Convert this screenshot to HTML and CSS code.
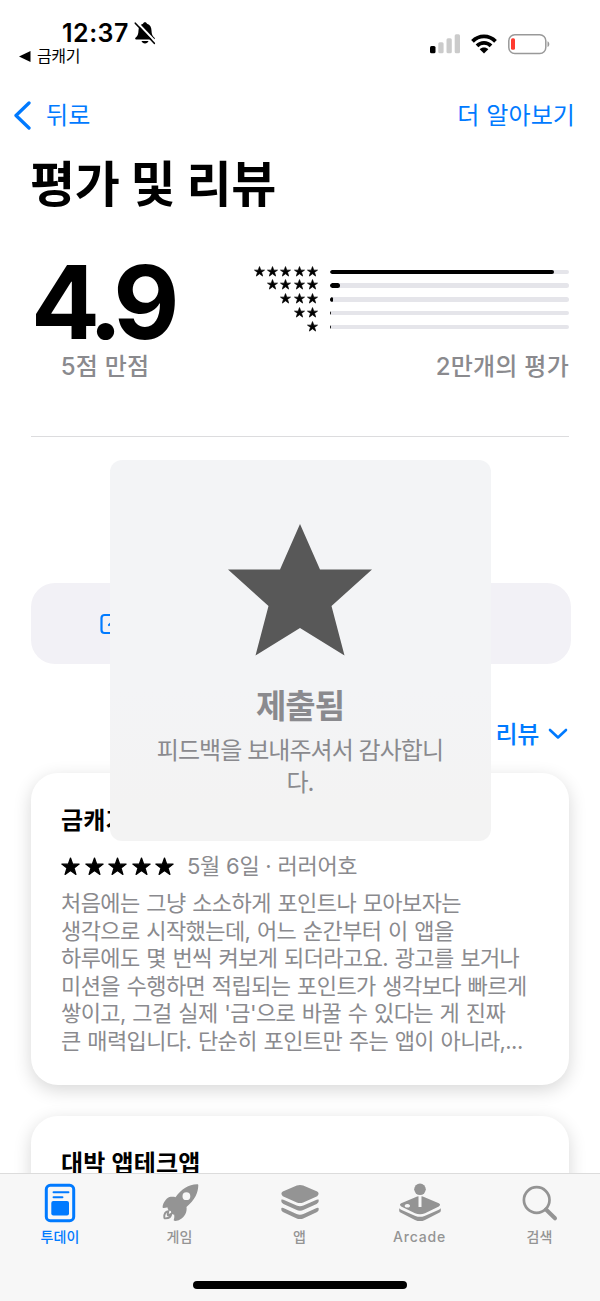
FILE: index.html
```html
<!DOCTYPE html>
<html lang="ko">
<head>
<meta charset="utf-8">
<title>평가 및 리뷰</title>
<link rel="stylesheet" href="styles.css">
</head>
<body>
<svg class="defs" width="0" height="0" aria-hidden="true">
  <symbol id="star" viewBox="0 0 20 19"><path d="M10 0.6 12.3 7H19.1L13.7 11 15.7 17.8 10 13.8 4.3 17.8 6.3 11 0.9 7H7.7Z" fill="currentColor" stroke="currentColor" stroke-width="1.300" stroke-linejoin="round"/></symbol>
</svg>
<div class="screen">
  <header class="status">
    <div class="status-left">
      <div class="clock"><span>12:37</span>
        <svg width="22" height="24" viewBox="0 0 22 24"><path d="M11 1.2c-1 0-1.8.6-2 1.6C5.800 3.800 4.600 6.400 4.500 9.500c-.1 4-1 5.500-3 7.300-.6.7-.4 1.600.6 1.600h17.800c1 0 1.200-.9.6-1.600-2-1.800-2.900-3.300-3-7.300-.1-3.100-1.300-5.700-4.500-6.700-.2-1-1-1.600-2-1.600ZM7.500 20h7c-.5 1.500-1.800 2.400-3.500 2.400S8 21.500 7.500 20Z"/><path d="M2.700 1 21.500 20.800" stroke="#fff" stroke-width="2"/><path d="M1.300 2.200 20.300 22.300" stroke="#000" stroke-width="1.600" stroke-linecap="round"/></svg>
      </div>
      <div class="return"><svg width="12" height="11" viewBox="0 0 12 11"><path d="M0 5.500 11.500 0v11Z"/></svg><span>금캐기</span></div>
    </div>
    <div class="status-right">
      <svg width="30" height="20" viewBox="0 0 30 20"><rect y="12" width="5.500" height="7.300" rx="1.500"/><g fill="#cbcbcb"><rect x="8.300" y="8.300" width="5.300" height="11" rx="1.500"/><rect x="16.500" y="4.300" width="5.300" height="15" rx="1.500"/><rect x="24.700" y=".3" width="5.300" height="19" rx="1.500"/></g></svg>
      <svg class="wifi" width="26" height="20" viewBox="0 0 26 20"><g fill="none" stroke="#000" stroke-width="3.800"><path d="M1.500 7.300C8 .7 18 .7 24.500 7.300"/><path d="M6 11.900c4-4 10-4 14 0"/></g><path d="M13 19.500 8.700 15.300c2.300-2.300 6.300-2.300 8.600 0Z"/></svg>
      <svg width="42" height="21" viewBox="0 0 42 21"><rect x=".8" y=".8" width="37" height="18.800" rx="6" fill="#fff" stroke="#999" stroke-width="1.500"/><rect x="3" y="4.300" width="4" height="11.500" rx="1.500" fill="#ff3b30"/><path d="M39.500 7.300c2.400.8 2.400 5 0 5.800Z" fill="#999"/></svg>
    </div>
  </header>
  <nav class="nav">
    <span class="back"><svg width="19" height="30" viewBox="0 0 19 30"><path d="M17 3 4 15.500 17 28" fill="none" stroke="#007aff" stroke-width="3.300" stroke-linecap="round" stroke-linejoin="round"/></svg><span>뒤로</span></span>
    <span class="more">더 알아보기</span>
  </nav>
  <h1 class="title">평가 및 리뷰</h1>
  <section class="rating">
    <div class="score"><div class="value">4.9</div><div class="caption">5점 만점</div></div>
    <div class="breakdown">
      <div class="rows">
        <div class="row"><span class="stars"><svg><use href="#star"/></svg><svg><use href="#star"/></svg><svg><use href="#star"/></svg><svg><use href="#star"/></svg><svg><use href="#star"/></svg></span><span class="bar"><span class="fill" style="width:93.700%"></span></span></div>
        <div class="row"><span class="stars"><svg><use href="#star"/></svg><svg><use href="#star"/></svg><svg><use href="#star"/></svg><svg><use href="#star"/></svg></span><span class="bar"><span class="fill" style="width:4.200%"></span></span></div>
        <div class="row"><span class="stars"><svg><use href="#star"/></svg><svg><use href="#star"/></svg><svg><use href="#star"/></svg></span><span class="bar"><span class="fill" style="width:1.100%"></span></span></div>
        <div class="row"><span class="stars"><svg><use href="#star"/></svg><svg><use href="#star"/></svg></span><span class="bar"><span class="fill" style="width:.2%"></span></span></div>
        <div class="row"><span class="stars"><svg><use href="#star"/></svg></span><span class="bar"><span class="fill" style="width:.6%"></span></span></div>
      </div>
      <div class="count">2만개의 평가</div>
    </div>
  </section>
  <div class="write"><svg width="22" height="22" viewBox="0 0 22 22" fill="none" stroke="#007aff" stroke-width="2.200" stroke-linecap="round"><path d="M13 2H4.500A3 3 0 0 0 1.500 5v12a3 3 0 0 0 3 3H16a3 3 0 0 0 3-3V9"/><path d="M9 12 20 2"/></svg></div>
  <div class="sort"><span>리뷰</span><svg width="20" height="12" viewBox="0 0 20 12"><path d="M2 2 10 9.500 18 2" fill="none" stroke="#007aff" stroke-width="2.600" stroke-linecap="round" stroke-linejoin="round"/></svg></div>
  <article class="card">
    <h2>금캐기</h2>
    <div class="meta"><span class="stars"><svg><use href="#star"/></svg><svg><use href="#star"/></svg><svg><use href="#star"/></svg><svg><use href="#star"/></svg><svg><use href="#star"/></svg></span><span class="byline">5월 6일 · 러러어호</span></div>
    <p>처음에는 그냥 소소하게 포인트나 모아보자는<br>생각으로 시작했는데, 어느 순간부터 이 앱을<br>하루에도 몇 번씩 켜보게 되더라고요. 광고를 보거나<br>미션을 수행하면 적립되는 포인트가 생각보다 빠르게<br>쌓이고, 그걸 실제 '금'으로 바꿀 수 있다는 게 진짜<br>큰 매력입니다. 단순히 포인트만 주는 앱이 아니라,...</p>
  </article>
  <article class="card"><h2>대박 앱테크앱</h2></article>

  <div class="toast">
    <svg width="144" height="132" viewBox="0 0 144 132"><path d="M72 0 92 45.500h52L103.500 82 116.500 131.500 72 104 27.500 131.500 40.500 82 0 45.500h52Z" fill="#585858"/></svg>
    <div class="toast-title">제출됨</div>
    <div class="toast-text">피드백을 보내주셔서 감사합니<br>다.</div>
  </div>

  <footer class="tabs">
    <div class="tab active"><svg width="44" height="40" viewBox="0 0 44 40"><rect x="8.300" y="2.300" width="27.400" height="35.400" rx="4" fill="none" stroke="currentColor" stroke-width="3"/><path d="M15.500 9.300h15M15.500 14.300h9" stroke="currentColor" stroke-width="1.900" stroke-linecap="round"/><rect x="13.300" y="18" width="17.700" height="14.500" rx="2" fill="currentColor"/></svg><span>투데이</span></div>
    <div class="tab"><svg width="44" height="40" viewBox="0 0 44 40"><path fill="currentColor" fill-rule="evenodd" d="M39 1.300c.9-.1 1.400.4 1.300 1.300-.2 7.700-3.500 14.500-11.800 21.300.8 5-1.800 10-6.500 12.600-2 1.300-4.300 1.700-5.700 1.300-.7-.3-.7-1-.4-1.600.6-1.500.5-2.700.2-4.600-1.800.3-3.400-1.500-3.200-3.500-2-.2-3.500-1.700-3.300-3.600-1.300-.2-2.300.2-3.700.5-.9.200-1.400-.3-1.300-1.300.5-4.200 4.500-9.700 8.200-9.900 1.800-.1 3.200-.2 4.700.4C23.500 6.300 30.500 1.400 39 1.300ZM28.400 9.300a3.900 3.900 0 1 0 0 7.800 3.900 3.900 0 0 0 0-7.800Z"/><path d="M10.300 28.300c-3.200.7-4.200 3.200-4 6 0 .8.4 1.200 1.200 1.100 3.200-.1 5.600-1.300 5.700-4.500l-2.500 1.200c-.8.300-1.200-.2-.9-1Z" fill="none" stroke="currentColor" stroke-width="1.900"/></svg><span>게임</span></div>
    <div class="tab"><svg width="44" height="40" viewBox="0 0 44 40"><g fill="currentColor"><path d="M18.800 2.600q3.200-1.400 6.400 0l14 6q2.800 2 0 4.600l-14 6.200q-3.200 1.400-6.400 0l-14-6.200q-2.800-2.600 0-4.600Z"/><path d="M3.400 16.600q1-.4 2 .1l13.200 5.800q3.400 1.500 6.800 0l13.200-5.800q1-.5 2-.1c.4 2-.3 3.600-2 4.300l-12.800 5.900q-3.800 1.700-7.600 0L5.400 20.900c-1.700-.7-2.400-2.300-2-4.300Z"/><path d="M3.400 25q1-.4 2 .1l13.200 5.800q3.400 1.500 6.800 0l13.200-5.800q1-.5 2-.1c.4 2-.3 3.600-2 4.300l-12.800 5.900q-3.800 1.700-7.600 0L5.400 29.300c-1.700-.7-2.400-2.300-2-4.300Z"/></g></svg><span>앱</span></div>
    <div class="tab"><svg width="44" height="40" viewBox="0 0 44 40"><g fill="currentColor"><circle cx="22" cy="6.300" r="5.800"/><path fill-rule="evenodd" d="M20.500 13.300q-1.300.2-2.500.8L3.200 20.300q-2.500 1.500 0 3.200L17 30.200q5 2.200 10 0l13.800-6.700q2.500-1.700 0-3.200L26 14.100q-1.200-.6-2.500-.8V24h-3ZM9.300 21a2.700 1.800 0 1 0 .1 0Z"/><path d="M1.200 25.300q1 1 2.500 1.700l13.700 5.900q4.600 1.900 9.200 0L40.300 27q1.500-.7 2.500-1.700v2.500q0 1.300-1.700 2L27 36.900q-5 2.400-10 0L2.900 29.800q-1.700-.7-1.700-2Z"/></g></svg><span class="latin">Arcade</span></div>
    <div class="tab"><svg width="44" height="40" viewBox="0 0 44 40"><circle cx="18.700" cy="17" r="12.800" fill="none" stroke="currentColor" stroke-width="2.700"/><path d="M28 26.500 37 35.300" stroke="currentColor" stroke-width="4" stroke-linecap="round"/></svg><span>검색</span></div>
    <div class="home"></div>
  </footer>
</div>
</body>
</html>
```
FILE: styles.css
```css
* { box-sizing: border-box; }
body {
  margin: 0;
  background: #fff;
  color: #000;
  font-family: Inter, "Noto Sans CJK KR", sans-serif;
}
svg { display: block; flex: none; }
.defs { position: absolute; }
.screen { position: relative; width: 600px; height: 1301px; overflow: hidden; }

.status { display: flex; justify-content: space-between; height: 88px; padding: 19px 50px 0 19px; }
.clock { display: flex; align-items: center; gap: 5px; height: 28px; padding-left: 43px; font-size: 25px; font-weight: 600; letter-spacing: .5px; }
.return { display: flex; align-items: center; gap: 6px; height: 18px; font-size: 16px; line-height: 18px; letter-spacing: -.4px; }
.status-right { display: flex; align-items: center; height: 50px; }
.status-right .wifi { margin: 0 11px 0 11px; }

.nav { display: flex; justify-content: space-between; align-items: center; height: 54px; padding: 0 25px 0 12px; color: #007aff; font-size: 24px; line-height: 30px; letter-spacing: .1px; }
.nav .more, .back span { padding-top: 2px; }
.back { display: flex; align-items: center; gap: 15px; height: 30px; }
.title { margin: 0; padding-left: 30px; height: 86px; line-height: 86px; font-size: 49px; font-weight: 700; letter-spacing: -.4px; }

.rating { display: flex; justify-content: space-between; margin: 0 31px 0 31px; height: 209px; border-bottom: 1px solid #dcdcde; color: #8a8a8e; font-size: 24px; font-weight: 500; letter-spacing: .25px; }
.score { width: 148px; padding-top: 25px; text-align: center; }
.value { height: 98px; margin-right: 14px; line-height: 98px; color: #000; font-size: 102px; font-weight: 700; letter-spacing: -8px; }
.caption, .count { height: 32px; line-height: 32px; }
.breakdown { width: 316px; padding-top: 37px; }
.rows { height: 86px; color: #000; }
.row { display: flex; align-items: center; justify-content: flex-end; height: 13.75px; gap: 12px; }
.row .stars { display: flex; gap: 2.300px; padding-bottom: 1.500px; }
.row .stars svg { width: 11px; height: 11px; }
.bar { width: 239px; height: 4.500px; border-radius: 3px; background: #e5e5ea; overflow: hidden; }
.fill { display: block; height: 100%; border-radius: 3px; background: #000; }
.count { text-align: right; }

.write { display: flex; align-items: center; height: 81px; margin: 146px 29px 0 31px; padding-left: 69px; border-radius: 24px; background: #f2f1f6; }
.sort { display: flex; align-items: center; justify-content: flex-end; gap: 9px; height: 40px; margin: 50px 32px 19px; color: #007aff; font-size: 24px; line-height: 30px; font-weight: 500; letter-spacing: -.3px; }
.sort span { padding-top: 1px; }

.card { height: 312px; margin: 0 31px 31px; padding: 32px 30px 0; border-radius: 27px; background: #fff; box-shadow: 0 5px 18px rgba(0, 0, 0, .16); }
.card h2 { margin: 0; height: 32px; line-height: 32px; font-size: 24px; font-weight: 700; letter-spacing: .2px; }
.meta { display: flex; align-items: center; gap: 13px; height: 30px; margin-top: 14px; color: #8a8a8e; font-size: 22px; line-height: 26px; letter-spacing: -.25px; }
.byline { padding-bottom: 1px; }
.meta .stars { display: flex; gap: 4.500px; color: #000; }
.meta .stars svg { width: 19px; height: 19px; }
.card p { margin: 9px 0 0; color: #8a8a8e; font-size: 22px; line-height: 27.600px; letter-spacing: -.58px; word-spacing: 1px; white-space: nowrap; }

.toast { position: absolute; left: 109.500px; top: 460px; width: 381px; height: 381px; padding-top: 63.500px; display: flex; flex-direction: column; align-items: center; border-radius: 12px; background: linear-gradient(#f3f4f6 60%, #f3f3f3 90%); color: #8a8a8e; text-align: center; }
.toast-title { height: 44px; margin-top: 28.500px; line-height: 44px; font-size: 33px; font-weight: 700; letter-spacing: -1px; }
.toast-text { font-size: 24px; line-height: 32px; letter-spacing: -.95px; margin-top: 6.500px; }

.tabs { position: absolute; left: 0; top: 1173px; width: 600px; height: 128px; display: grid; grid-template-columns: repeat(5, 1fr); grid-template-rows: 107px 8px; border-top: 1.500px solid #dcdcdc; background: #f7f7f7; color: #949494; }
.tab { display: flex; flex-direction: column; align-items: center; padding: 9px 1px 0 0; font-size: 14px; font-weight: 500; letter-spacing: .1px; }
.tab span { line-height: 20px; margin-top: 4px; }
.tab .latin { letter-spacing: .8px; }
.tab.active { color: #007aff; padding-right: 0; }
.home { grid-column: 1 / -1; justify-self: center; width: 214px; height: 8px; border-radius: 4px; background: #000; }
```
